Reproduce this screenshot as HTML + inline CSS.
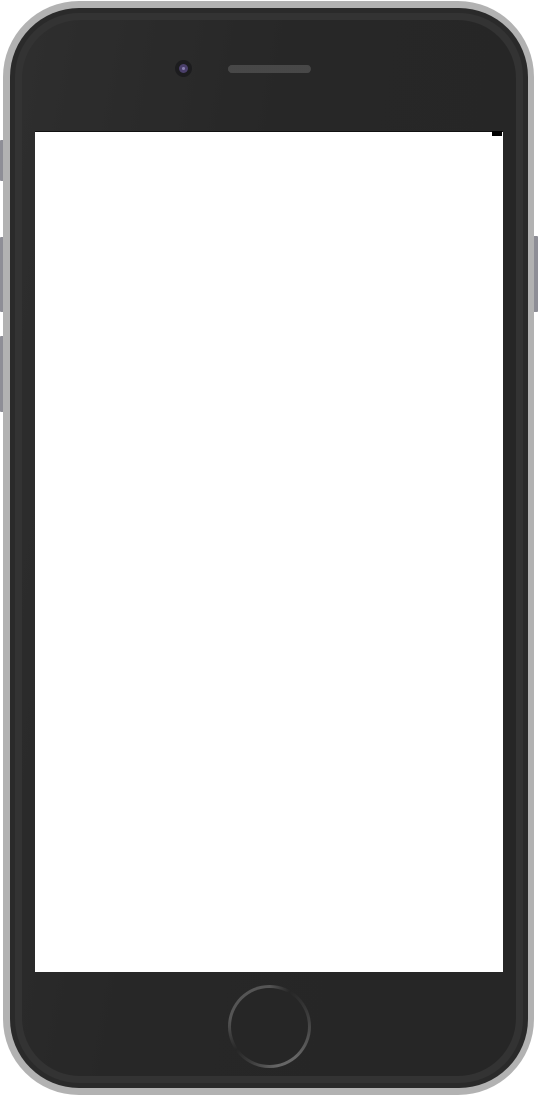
<!DOCTYPE html>
<html><head><style>
html,body{margin:0;padding:0;background:#fff;width:538px;height:1096px;overflow:hidden;position:relative}
div{position:absolute;box-sizing:border-box}
.btn{background:#8e8e96;border-radius:1px}
</style></head><body>
<div class="btn" style="left:0;top:140px;width:5px;height:41px"></div>
<div class="btn" style="left:0;top:237px;width:5px;height:75px"></div>
<div class="btn" style="left:0;top:336px;width:5px;height:76px"></div>
<div class="btn" style="left:533px;top:236px;width:5px;height:76px"></div>
<div style="left:3px;top:1px;width:531px;height:1094px;border-radius:76px;background:#b2b2b2"></div>
<div style="left:10px;top:8px;width:518px;height:1080px;border-radius:69px;background:#2a2a2a"></div>
<div style="left:15px;top:13px;width:508px;height:1070px;border-radius:64px;background:#333"></div>
<div style="left:22px;top:20px;width:494px;height:1056px;border-radius:58px;background:linear-gradient(100deg,#2e2e2e 0%,#272727 40%,#262626 100%)"></div>
<div style="left:35px;top:131px;width:468px;height:841px;background:#fff;border-top:1px solid #111"></div>
<div style="left:492px;top:131px;width:10px;height:5px;background:#000"></div>
<div style="left:175px;top:60px;width:17px;height:17px;border-radius:50%;background:#1c1c1e"></div>
<div style="left:179px;top:64px;width:9px;height:9px;border-radius:50%;background:#4a3f6a"></div>
<div style="left:182px;top:67px;width:3px;height:3px;border-radius:50%;background:#8a80b0"></div>
<div style="left:228px;top:65px;width:83px;height:8px;border-radius:4px;background:#3c3c3c;background-image:radial-gradient(#666 0.6px,transparent 0.8px);background-size:2px 2px"></div>
<div style="left:228px;top:985px;width:83px;height:83px;border-radius:50%;background:conic-gradient(from 0deg,#555 0deg,#262626 30deg,#3a3a3a 70deg,#666 140deg,#666 170deg,#3a3a3a 210deg,#262626 235deg,#555 280deg,#555 360deg)"></div>
<div style="left:231px;top:988px;width:77px;height:77px;border-radius:50%;background:#262626"></div>
</body></html>
